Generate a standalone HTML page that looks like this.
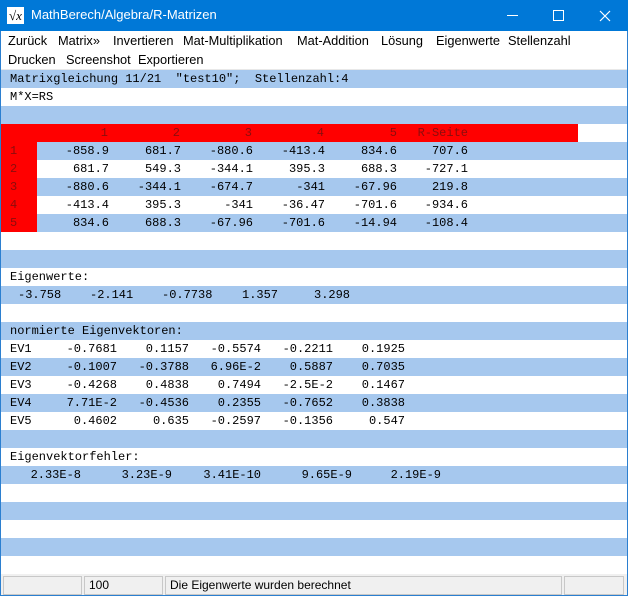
<!DOCTYPE html>
<html><head><meta charset="utf-8"><style>
*{margin:0;padding:0;box-sizing:border-box}
body{width:628px;height:596px;overflow:hidden;background:#fff;position:relative;font-family:"Liberation Sans",sans-serif}
.a{position:absolute;white-space:pre}
#tb{position:absolute;left:0;top:0;width:628px;height:31px;background:#0078d7}
.m{position:absolute;font-size:12.8px;color:#000}
.row{position:absolute;left:1px;width:626px;height:18px}
.b{background:#a6c8ee}
.t{position:absolute;font-family:"Liberation Mono",monospace;font-size:12px;line-height:18px;white-space:pre;color:#000}
.r{text-align:right}
.hd{color:#8b0d0d}
.sb{position:absolute;top:576px;height:19px;border:1px solid #c8c8c8;background:#f0f0f0;font-size:12px;line-height:17px;padding-left:4px}
</style></head><body>
<div id="tb"></div>
<div class="a" style="left:7px;top:7px;width:17px;height:17px;background:#fff;font-family:'Liberation Serif',serif;font-size:13px;line-height:17px;text-align:center;font-style:italic">√x</div>
<div class="a" style="left:31px;top:7px;color:#fff;font-size:13px">MathBerech/Algebra/R-Matrizen</div>
<div class="a" style="left:507px;top:15px;width:11px;height:1px;background:#fff"></div>
<div class="a" style="left:553px;top:10px;width:11px;height:11px;border:1px solid #fff"></div>
<svg class="a" style="left:599px;top:10px" width="12" height="12"><path d="M1 1L11 11M11 1L1 11" stroke="#fff" stroke-width="1.2"/></svg>
<div class="m" style="left:8px;top:33px">Zurück</div>
<div class="m" style="left:58px;top:33px">Matrix»</div>
<div class="m" style="left:113px;top:33px">Invertieren</div>
<div class="m" style="left:183px;top:33px">Mat-Multiplikation</div>
<div class="m" style="left:297px;top:33px">Mat-Addition</div>
<div class="m" style="left:381px;top:33px">Lösung</div>
<div class="m" style="left:436px;top:33px">Eigenwerte</div>
<div class="m" style="left:508px;top:33px">Stellenzahl</div>
<div class="m" style="left:8px;top:52px">Drucken</div>
<div class="m" style="left:66px;top:52px">Screenshot</div>
<div class="m" style="left:138px;top:52px">Exportieren</div>
<div class="a" style="left:0;top:69px;width:628px;height:1px;background:#e8e8e8"></div>
<div class="a" style="left:0;top:31px;width:1px;height:565px;background:#2b7fd0"></div>
<div class="a" style="left:627px;top:31px;width:1px;height:565px;background:#2b7fd0"></div>
<div class="a" style="left:0;top:595px;width:628px;height:1px;background:#2b7fd0"></div>

<div class="row b" style="top:70px"></div>
<div class="row b" style="top:106px"></div>
<div class="row" style="top:124px;width:577px;background:#f00"></div>
<div class="row b" style="top:142px"></div>
<div class="row b" style="top:178px"></div>
<div class="row b" style="top:214px"></div>
<div class="a" style="left:1px;top:142px;width:36px;height:90px;background:#f00"></div>
<div class="row b" style="top:250px"></div>
<div class="row b" style="top:286px"></div>
<div class="row b" style="top:322px"></div>
<div class="row b" style="top:358px"></div>
<div class="row b" style="top:394px"></div>
<div class="row b" style="top:430px"></div>
<div class="row b" style="top:466px"></div>
<div class="row b" style="top:502px"></div>
<div class="row b" style="top:538px"></div>

<div class="t" style="left:10px;top:70px">Matrixgleichung 11/21  "test10";  Stellenzahl:4</div>
<div class="t" style="left:10px;top:88px">M*X=RS</div>

<div class="t hd r" style="right:520px;top:124px">1</div>
<div class="t hd r" style="right:448px;top:124px">2</div>
<div class="t hd r" style="right:376px;top:124px">3</div>
<div class="t hd r" style="right:304px;top:124px">4</div>
<div class="t hd r" style="right:231px;top:124px">5</div>
<div class="t hd r" style="right:160px;top:124px">R-Seite</div>

<div class="t hd" style="left:10px;top:142px">1</div>
<div class="t hd" style="left:10px;top:160px">2</div>
<div class="t hd" style="left:10px;top:178px">3</div>
<div class="t hd" style="left:10px;top:196px">4</div>
<div class="t hd" style="left:10px;top:214px">5</div>

<div class="t r" style="right:519px;top:142px">-858.9<br>681.7<br>-880.6<br>-413.4<br>834.6</div>
<div class="t r" style="right:447px;top:142px">681.7<br>549.3<br>-344.1<br>395.3<br>688.3</div>
<div class="t r" style="right:375px;top:142px">-880.6<br>-344.1<br>-674.7<br>-341<br>-67.96</div>
<div class="t r" style="right:303px;top:142px">-413.4<br>395.3<br>-341<br>-36.47<br>-701.6</div>
<div class="t r" style="right:231px;top:142px">834.6<br>688.3<br>-67.96<br>-701.6<br>-14.94</div>
<div class="t r" style="right:160px;top:142px">707.6<br>-727.1<br>219.8<br>-934.6<br>-108.4</div>

<div class="t" style="left:10px;top:268px">Eigenwerte:</div>
<div class="t" style="left:18px;top:286px">-3.758</div>
<div class="t" style="left:90px;top:286px">-2.141</div>
<div class="t" style="left:162px;top:286px">-0.7738</div>
<div class="t" style="left:242px;top:286px">1.357</div>
<div class="t" style="left:314px;top:286px">3.298</div>

<div class="t" style="left:10px;top:322px">normierte Eigenvektoren:</div>
<div class="t" style="left:10px;top:340px">EV1<br>EV2<br>EV3<br>EV4<br>EV5</div>
<div class="t r" style="right:511px;top:340px">-0.7681<br>-0.1007<br>-0.4268<br>7.71E-2<br>0.4602</div>
<div class="t r" style="right:439px;top:340px">0.1157<br>-0.3788<br>0.4838<br>-0.4536<br>0.635</div>
<div class="t r" style="right:367px;top:340px">-0.5574<br>6.96E-2<br>0.7494<br>0.2355<br>-0.2597</div>
<div class="t r" style="right:295px;top:340px">-0.2211<br>0.5887<br>-2.5E-2<br>-0.7652<br>-0.1356</div>
<div class="t r" style="right:223px;top:340px">0.1925<br>0.7035<br>0.1467<br>0.3838<br>0.547</div>

<div class="t" style="left:10px;top:448px">Eigenvektorfehler:</div>
<div class="t r" style="right:547px;top:466px">2.33E-8</div>
<div class="t r" style="right:456px;top:466px">3.23E-9</div>
<div class="t r" style="right:367px;top:466px">3.41E-10</div>
<div class="t r" style="right:276px;top:466px">9.65E-9</div>
<div class="t r" style="right:187px;top:466px">2.19E-9</div>

<div class="a" style="left:1px;top:574px;width:626px;height:21px;background:#f0f0f0"></div>
<div class="sb" style="left:3px;width:79px"></div>
<div class="sb" style="left:84px;width:79px">100</div>
<div class="sb" style="left:165px;width:397px">Die Eigenwerte wurden berechnet</div>
<div class="sb" style="left:564px;width:60px"></div>
</body></html>
